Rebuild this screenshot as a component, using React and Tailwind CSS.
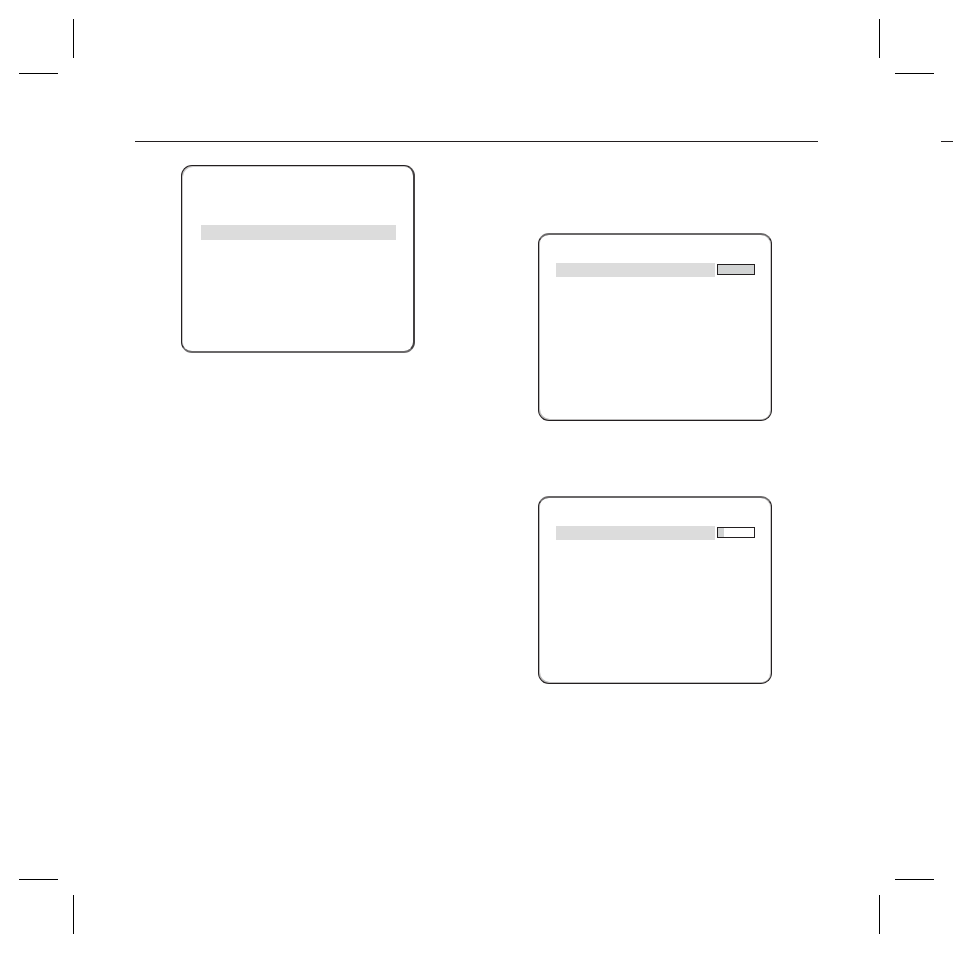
function CropMarks({ edge }) {
  const top = edge === 'top';
  const column = top ? 'flex-col' : 'flex-col-reverse';
  return (
    <div className="flex justify-between px-[19px]" aria-hidden="true">
      <div className={`flex ${column} h-[55px] w-[55px] justify-between`}>
        <span className="h-[39px] w-px self-end bg-black" />
        <span className="h-px w-[39px] self-start bg-black" />
      </div>
      <div className={`flex ${column} h-[55px] w-[55px] justify-between`}>
        <span className="h-[39px] w-px self-start bg-black" />
        <span className="h-px w-[39px] self-end bg-black" />
      </div>
    </div>
  );
}

function Level({ value, max }) {
  return (
    <div
      role="meter"
      aria-label="Level"
      aria-valuemin={0}
      aria-valuenow={value}
      aria-valuemax={max}
      className="mt-px h-[11px] w-[38px] shrink-0 border border-[#231f20] bg-white"
    >
      <div className="h-full bg-[#d1d3d3]" style={{ width: `${(value / max) * 100}%` }} />
    </div>
  );
}

function LevelScreen({ value, max }) {
  return (
    <section className="h-[188px] rounded-[11px] border border-t-2 border-[#231f20] border-t-[#6b696a] pt-7 pr-4 pl-[17px] shadow-[inset_1px_-1px_0_#231f2050,inset_-1px_0_0_#231f2040]">
      <div className="flex items-start gap-0.5">
        <div className="h-3.5 flex-1 bg-[#dcdcdc]" />
        <Level value={value} max={max} />
      </div>
    </section>
  );
}

export default function App() {
  return (
    <div className="flex min-h-screen flex-col bg-white py-[19px]">
      <CropMarks edge="top" />
      <div className="mt-[67px] flex gap-[123px] pl-[135px]">
        <hr className="h-px flex-1 border-0 bg-[#231f20]" />
        <hr className="h-px w-3 border-0 bg-[#231f20]" />
      </div>
      <main className="flex items-start justify-between px-[181px] pt-[23px] pb-8">
        <div className="w-[234px]">
          <section className="h-[188px] rounded-[11px] border border-r-2 border-b-2 border-[#231f20] border-r-[#444142] border-b-[#6b696a] pt-[59px] pr-[17px] pl-[19px] shadow-[inset_1px_1px_0_#231f2040]">
            <div className="h-[15px] bg-[#dcdcdc]" />
          </section>
        </div>
        <div className="flex w-[234px] flex-col gap-[75px] pt-[68px]">
          <LevelScreen value={6} max={6} />
          <LevelScreen value={1} max={6} />
        </div>
      </main>
      <div className="mt-auto">
        <CropMarks edge="bottom" />
      </div>
    </div>
  );
}
